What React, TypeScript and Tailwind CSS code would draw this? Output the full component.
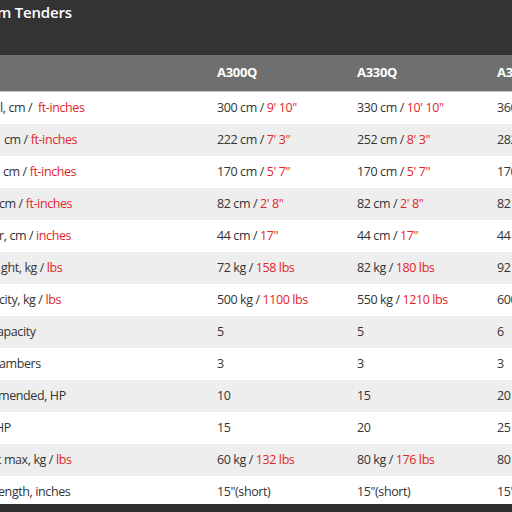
const models = ["A300Q", "A330Q", "A360Q"];

type Cell = { v: string; r?: string };

const rows: { label: Cell; indent: string; cells: Cell[] }[] = [
  { label: { v: "l, cm /  ", r: "ft-inches" }, indent: "ml-[0px]", cells: [{ v: "300 cm / ", r: "9' 10\"" }, { v: "330 cm / ", r: "10' 10\"" }, { v: "360 cm / ", r: "11' 10\"" }] },
  { label: { v: "cm / ", r: "ft-inches" }, indent: "ml-[4px]", cells: [{ v: "222 cm / ", r: "7' 3\"" }, { v: "252 cm / ", r: "8' 3\"" }, { v: "282 cm / ", r: "9' 3\"" }] },
  { label: { v: "cm / ", r: "ft-inches" }, indent: "ml-[3px]", cells: [{ v: "170 cm / ", r: "5' 7\"" }, { v: "170 cm / ", r: "5' 7\"" }, { v: "170 cm / ", r: "5' 7\"" }] },
  { label: { v: "cm / ", r: "ft-inches" }, indent: "ml-[-1px]", cells: [{ v: "82 cm / ", r: "2' 8\"" }, { v: "82 cm / ", r: "2' 8\"" }, { v: "82 cm / ", r: "2' 8\"" }] },
  { label: { v: "r, cm / ", r: "inches" }, indent: "ml-[-1px]", cells: [{ v: "44 cm / ", r: "17\"" }, { v: "44 cm / ", r: "17\"" }, { v: "44 cm / ", r: "17\"" }] },
  { label: { v: "ght, kg / ", r: "lbs" }, indent: "ml-[1px]", cells: [{ v: "72 kg / ", r: "158 lbs" }, { v: "82 kg / ", r: "180 lbs" }, { v: "92 kg / ", r: "202 lbs" }] },
  { label: { v: "city, kg / ", r: "lbs" }, indent: "ml-[-1px]", cells: [{ v: "500 kg / ", r: "1100 lbs" }, { v: "550 kg / ", r: "1210 lbs" }, { v: "600 kg / ", r: "1320 lbs" }] },
  { label: { v: "apacity" }, indent: "ml-[-3px]", cells: [{ v: "5" }, { v: "5" }, { v: "6" }] },
  { label: { v: "ambers" }, indent: "ml-[-1px]", cells: [{ v: "3" }, { v: "3" }, { v: "3" }] },
  { label: { v: "mended, HP" }, indent: "ml-[-2px]", cells: [{ v: "10" }, { v: "15" }, { v: "20" }] },
  { label: { v: "HP" }, indent: "ml-[-5px]", cells: [{ v: "15" }, { v: "20" }, { v: "25" }] },
  { label: { v: "t max, kg / ", r: "lbs" }, indent: "ml-[-3px]", cells: [{ v: "60 kg / ", r: "132 lbs" }, { v: "80 kg / ", r: "176 lbs" }, { v: "80 kg / ", r: "176 lbs" }] },
  { label: { v: "ength, inches" }, indent: "ml-[-2px]", cells: [{ v: "15\"(short)" }, { v: "15\"(short)" }, { v: "15\"(short)" }] },
];

function Text({ c }: { c: Cell }) {
  return (
    <span className="whitespace-pre">
      {c.v}
      {c.r && <span className="text-[#e3252b]">{c.r}</span>}
    </span>
  );
}

export default function App() {
  return (
    <div className="flex flex-col w-[512px] h-[512px] overflow-hidden bg-[#2f2f2f] font-['Open_Sans',sans-serif] text-[12.5px] tracking-[-0.4px] text-[#333]">
      <div className="h-[55px] shrink-0 bg-[#333333] pt-[1px]">
        <h1 className="text-[15px] font-semibold tracking-[-0.2px] text-white leading-[22px] ml-[-3px] whitespace-pre">m Tenders</h1>
      </div>

      <div className="flex h-[37px] shrink-0 items-center bg-[#6f6f6f] border-b border-[#c8c8c8] text-[13px] tracking-[-0.3px] font-bold text-white">
        <div className="w-[205px] shrink-0" />
        {models.map((m) => (
          <div key={m} className="w-[140px] shrink-0 pl-[12px]">
            {m}
          </div>
        ))}
      </div>

      <div className="h-[412px] shrink-0 overflow-hidden">
        {rows.map((row, i) => (
          <div
            key={i}
            className={`flex h-[32px] items-center ${i % 2 === 0 ? "bg-white" : "bg-[#eeeeee]"}`}
          >
            <div className="w-[205px] shrink-0 overflow-hidden">
              <div className={row.indent}>
                <Text c={row.label} />
              </div>
            </div>
            {row.cells.map((c, j) => (
              <div key={j} className="w-[140px] shrink-0 pl-[12px]">
                <Text c={c} />
              </div>
            ))}
          </div>
        ))}
      </div>
    </div>
  );
}
